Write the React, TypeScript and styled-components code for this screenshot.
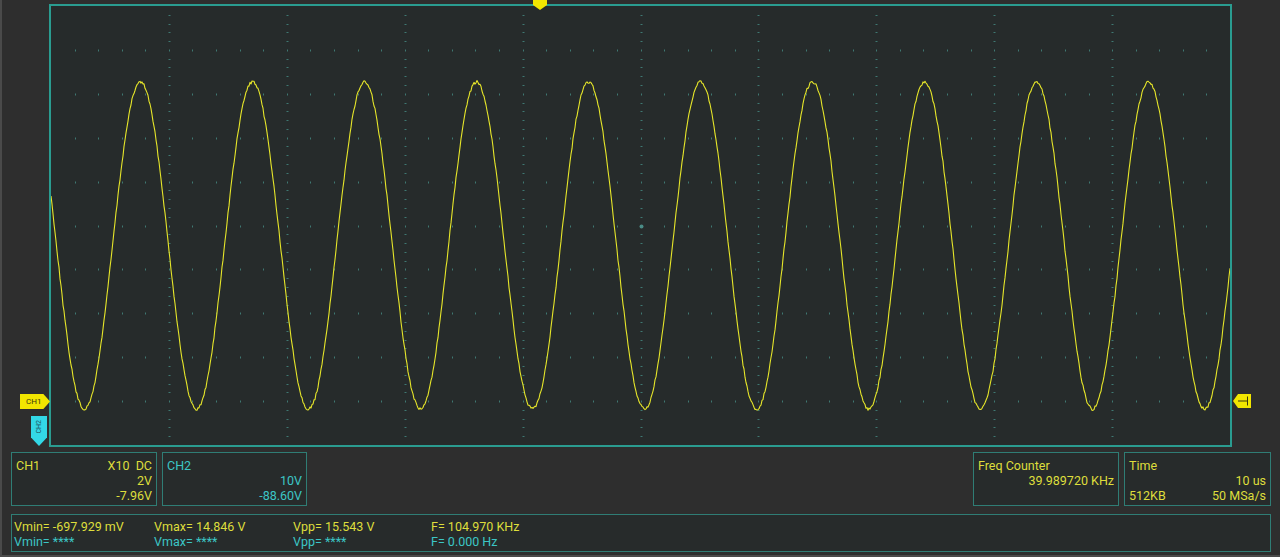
import React from "react";
import styled, { createGlobalStyle } from "styled-components";

const GlobalStyle = createGlobalStyle`
  html, body { margin: 0; padding: 0; background: #2e2e2e; }
  body { font-family: Roboto, "Noto Sans", sans-serif; }
`;

const YELLOW = "#dede3c";
const CYAN = "#3cc6c6";
const TEAL = "#2a9c90";
const BOX_BORDER = "#2f7d75";

const Screen = styled.div`
  width: 1280px;
  height: 557px;
  box-sizing: border-box;
  background: #2e2e2e;
  display: flex;
  flex-direction: column;
  overflow: hidden;
  border-left: 2px solid #4a4a4a;
  border-bottom: 2px solid #4a4a4a;
`;

const Scope = styled.div`
  position: relative;
  margin: 4px 0 0 47px;
  width: 1183px;
  height: 443px;
  box-sizing: border-box;
  border: 2px solid ${TEAL};
  background: #262b2b;
`;

const Plot = styled.svg`
  display: block;
  width: 1179px;
  height: 439px;
`;

const Ch1Marker = styled.div`
  position: absolute;
  left: -31px;
  top: 388px;
  width: 30px;
  height: 15px;
  background: #f2e600;
  clip-path: polygon(0 0, 78% 0, 100% 50%, 78% 100%, 0 100%);
  color: #3a3a10;
  font-size: 8px;
  line-height: 15px;
  padding-left: 6px;
  box-sizing: border-box;
`;

const Ch2Marker = styled.div`
  position: absolute;
  left: -20px;
  top: 410px;
  width: 16px;
  height: 30px;
  background: #33d8e6;
  clip-path: polygon(0 0, 100% 0, 100% 72%, 50% 100%, 0 72%);
  display: flex;
  align-items: flex-start;
  justify-content: center;
`;

const Ch2Text = styled.span`
  display: block;
  margin-top: 4px;
  font-size: 7px;
  color: #1f5560;
  writing-mode: vertical-rl;
  transform: rotate(180deg);
`;

const TrigMarker = styled.svg`
  position: absolute;
  right: -21px;
  top: 388px;
  width: 18px;
  height: 14px;
`;

const TopMarker = styled.svg`
  position: absolute;
  left: 482px;
  top: -6px;
  width: 14px;
  height: 10px;
`;

const InfoRow = styled.div`
  display: flex;
  gap: 5px;
  margin-top: 5px;
  padding: 0 9px 0 9px;
  height: 54px;
`;

const Spacer = styled.div`
  flex: 1;
`;

const Box = styled.div<{ $w: number; $color: string }>`
  width: ${(p) => p.$w}px;
  height: 54px;
  box-sizing: border-box;
  border: 1px solid ${BOX_BORDER};
  background: #272b2b;
  color: ${(p) => p.$color};
  font-size: 12.5px;
  line-height: 15px;
  padding: 5px 4px 0 4px;
  display: flex;
  flex-direction: column;
`;

const Line = styled.div<{ $align?: string }>`
  display: flex;
  justify-content: ${(p) => p.$align || "space-between"};
  white-space: nowrap;
  height: 15px;
`;

const MeasureBar = styled.div`
  margin: 8px 9px 0 9px;
  height: 38px;
  box-sizing: border-box;
  border: 1px solid ${BOX_BORDER};
  background: #272b2b;
  padding: 4px 0 0 2px;
  display: grid;
  grid-template-columns: 140px 139px 138px 1fr;
  grid-auto-rows: 15px;
  font-size: 12.5px;
  line-height: 15px;
`;

const Cell = styled.div<{ $color: string }>`
  color: ${(p) => p.$color};
  white-space: nowrap;
`;

function rng(seed: number) {
  let s = seed;
  return () => {
    s = (s * 1103515245 + 12345) & 0x7fffffff;
    return s / 0x7fffffff;
  };
}

const W = 1179;
const H = 439;

function buildWave(): string {
  const r = rng(7);
  const pts: string[] = [];
  const period = 112.0;
  const peak = 140.5 - 51;
  for (let x = 0; x <= W; x += 1) {
    const y =
      245.5 - 6 - 163.5 * Math.cos((2 * Math.PI * (x - peak)) / period);
    const n = (r() - 0.5) * 3;
    pts.push(`${x},${(y + n).toFixed(1)}`);
  }
  return pts.join(" ");
}

function buildGrid() {
  const els: React.ReactNode[] = [];
  const dx = W / 10;
  const dy = H / 10;
  for (let k = 1; k < 10; k++) {
    const x = Math.round(dx * k) + 0.5;
    for (let t = 1; t < 50; t++) {
      if (t % 5 === 0) continue;
      const y = Math.round((dy / 5) * t);
      els.push(
        <line key={`v${k}-${t}`} x1={x - 1} x2={x + 1} y1={y + 0.5} y2={y + 0.5} />
      );
    }
  }
  for (let j = 1; j < 10; j++) {
    const y = Math.round(dy * j) + 0.5;
    for (let t = 1; t < 50; t++) {
      const x = Math.round((dx / 5) * t) + 0.5;
      els.push(
        <line key={`h${j}-${t}`} x1={x} x2={x} y1={y - 1} y2={y + 1} />
      );
    }
  }
  return els;
}

export default function App() {
  const wave = React.useMemo(buildWave, []);
  const grid = React.useMemo(buildGrid, []);
  return (
    <>
      <GlobalStyle />
      <Screen>
        <Scope>
          <Plot viewBox={`0 0 ${W} ${H}`}>
            <g stroke="#3f7872" strokeWidth={1}>
              {grid}
            </g>
            <circle cx={Math.round(W / 2) + 0.5} cy={Math.round(H / 2) + 0.5} r={2} fill="#4a8c86" />
            <polyline
              points={wave}
              fill="none"
              stroke="#e6e62a"
              strokeWidth={1.1}
              strokeLinejoin="round"
            />
          </Plot>
          <Ch1Marker>CH1</Ch1Marker>
          <Ch2Marker>
            <Ch2Text>CH2</Ch2Text>
          </Ch2Marker>
          <TrigMarker viewBox="0 0 18 14">
            <polygon points="0,7 5,0 18,0 18,14 5,14" fill="#f2e600" />
            <line x1="5" y1="7" x2="14" y2="7" stroke="#3a3a10" strokeWidth="1" />
            <line x1="14.5" y1="2.5" x2="14.5" y2="11.5" stroke="#3a3a10" strokeWidth="1" />
          </TrigMarker>
          <TopMarker viewBox="0 0 14 10">
            <polygon points="0,0 14,0 14,5 7,10 0,5" fill="#f2e600" />
          </TopMarker>
        </Scope>
        <InfoRow>
          <Box $w={146} $color={YELLOW}>
            <Line>
              <span>CH1</span>
              <span>X10&nbsp;&nbsp;DC</span>
            </Line>
            <Line $align="flex-end">2V</Line>
            <Line $align="flex-end">-7.96V</Line>
          </Box>
          <Box $w={145} $color={CYAN}>
            <Line>
              <span>CH2</span>
            </Line>
            <Line $align="flex-end">10V</Line>
            <Line $align="flex-end">-88.60V</Line>
          </Box>
          <Spacer />
          <Box $w={146} $color={YELLOW}>
            <Line>
              <span>Freq Counter</span>
            </Line>
            <Line $align="flex-end">39.989720 KHz</Line>
          </Box>
          <Box $w={147} $color={YELLOW}>
            <Line>
              <span>Time</span>
            </Line>
            <Line $align="flex-end">10 us</Line>
            <Line>
              <span>512KB</span>
              <span>50 MSa/s</span>
            </Line>
          </Box>
        </InfoRow>
        <MeasureBar>
          <Cell $color={YELLOW}>Vmin= -697.929 mV</Cell>
          <Cell $color={YELLOW}>Vmax= 14.846 V</Cell>
          <Cell $color={YELLOW}>Vpp= 15.543 V</Cell>
          <Cell $color={YELLOW}>F= 104.970 KHz</Cell>
          <Cell $color={CYAN}>Vmin= ****</Cell>
          <Cell $color={CYAN}>Vmax= ****</Cell>
          <Cell $color={CYAN}>Vpp= ****</Cell>
          <Cell $color={CYAN}>F= 0.000 Hz</Cell>
        </MeasureBar>
      </Screen>
    </>
  );
}
